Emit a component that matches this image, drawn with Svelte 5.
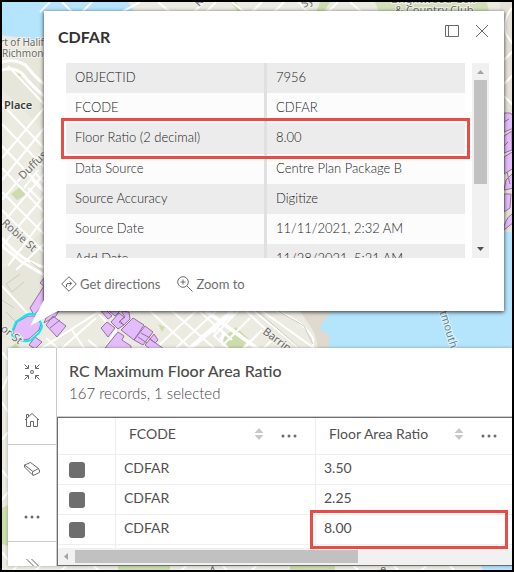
<script>
  const fields = [
    ['OBJECTID', '7956'],
    ['FCODE', 'CDFAR'],
    ['Floor Ratio (2 decimal)', '8.00'],
    ['Data Source', 'Centre Plan Package B'],
    ['Source Accuracy', 'Digitize'],
    ['Source Date', '11/11/2021, 2:32 AM'],
    ['Add Date', '11/28/2021, 5:21 AM']
  ];
  const columns = ['FCODE', 'Floor Area Ratio'];
  const records = [
    ['CDFAR', '3.50'],
    ['CDFAR', '2.25'],
    ['CDFAR', '8.00']
  ];
</script>

<div class="app">
  <svg class="map" viewBox="2 2 510 568" preserveAspectRatio="xMinYMin slice" aria-hidden="true">
    <rect width="514" height="572" fill="#ecebe2" />
    <path d="M2 60L44 50V130L2 90ZM2 270L44 230V300L2 340Z" fill="#e6e6da" />
    <path d="M0 0H127L136 14H44V44L24 38L0 35Z" fill="#b5e4fd" />
    <path d="M300 300H345L330 330V348H318L314 332L300 311Z" fill="#dfd9cf" />
    <path d="M329 308H504V231L514 233V350H328L330 336L323 331L319 328L326 318L330 314Z" fill="#b5e4fd" />
    <path d="M500 0H514V232L504 231Z" fill="#e6e1d8" />
    <path d="M374 0H486L490 14H380Z" fill="#d3dfba" />
    <path d="M222 339L236 327L249 339L241 349H230ZM158 324L165 327L162 332ZM11 194L20 187L28 194L17 200ZM2 508L8 505V546L2 544ZM16 76L19 71L22 76ZM10 348L16 343L20 348ZM118 564H170V572H118ZM290 564H335V572H290ZM320 2H330L324 12H316ZM231 2H236L242 12H238Z" fill="#cddcae" />

    <g fill="none" stroke="#fff" stroke-width="2">
      <path d="M2 104L44 148M2 124L44 167M2 146L44 190M2 168L44 212M2 192L44 234M2 210L44 252M2 286L30 316M8 66L44 104M44 108L2 158M44 128L2 180M44 150L2 200M44 174L2 224M44 196L2 246M44 218L8 266M44 244L16 270" />
      <path d="M2 238Q22 262 44 267M2 246L22 262L44 275" stroke-width="3" />
      <path d="M2 62Q20 58 28 68T44 84M2 70Q16 66 24 76T44 96" stroke-width="3" />
      <path d="M36 174L44 182M32 180L44 192M28 188L40 200M38 170L24 188" />
      <path d="M50 2L40 12M62 2L72 12M92 2L82 12M118 14L140 2M158 2L170 12M204 2L194 12M216 2L206 12M232 2L244 12M262 2L252 12M284 2L274 12M298 2L308 12M338 2L328 12M350 2L364 14" />
      <path d="M150 311L190 348M172 311L214 348M156 348L196 311M176 348L216 311M192 348L234 313M238 311L214 336L228 348M250 318L222 346M262 330L244 348M272 340L262 350M200 312L232 340" />
      <path d="M188 350L232 311M206 311L262 352" stroke-width="4" />
      <path d="M214 333Q216 326 221 330T218 341M221 343L225 332" />
      <path d="M246 311L288 350M254 311L302 350M262 311L314 348M276 311Q300 318 313 338V348" />
      <path d="M42 348L100 311M62 348L96 318M46 338L60 350M84 348L72 330M96 311L132 350M130 311L118 326L104 350M88 340L98 348" />
      <path d="M512 8Q502 20 506 34L514 46M504 60L514 50M504 96L514 106M514 74L504 84" />
      <path d="M2 352L8 360M8 376L2 390M2 402L8 412M2 440L8 432M2 470L8 478M2 500L8 492M2 552L8 560M12 572L20 562M34 572L44 562M60 572L70 562M90 562L100 572M180 572L190 562M220 562L228 572M250 572L260 562M350 562L360 572M390 562L400 572M420 572L430 562M446 562L456 572" />
    </g>
    <path d="M480 564H514V572H484Z" fill="#b5e4fd" />
    <g fill="none" stroke="#cfcbc0" stroke-width="1">
      <path d="M257 311L300 348M278 311L304 326L313 344M20 274L6 284L12 292L24 282M30 262L42 270M6 312L20 326M64 62L44 76M2 300L14 308" />
    </g>

    <g fill="#e2bcfb" stroke="#96709f" stroke-width="1" stroke-linejoin="round">
      <path d="M40 283L44 278V286ZM30 308L44 286V304L34 315ZM46 325L53 316L66 326L57 337ZM50 328L60 320M46 318L60 308L56 316L44 323ZM29 345L35 337L42 342L35 349Z" />
      <path d="M101 311H107L112 316L108 319ZM109 311H120L115 316ZM111 322L119 313L124 317L119 322L124 325L118 329ZM121 311L129 312L130 319L124 325L120 321L125 317ZM101 328L107 322L115 328L108 337ZM105 348L118 332L124 336L122 340L131 346V350ZM121 330L133 318L144 325L134 340ZM134 340L145 326L153 332L143 345ZM138 337L147 343M141 333L150 338M145 345L150 339L164 349H150ZM150 339L154 334L158 340L155 343Z" />
      <path d="M504 113H510L514 116V128L504 132ZM504 136L512 131V150L504 153ZM504 157L514 151V168L504 174ZM506 180L514 172V188L504 190ZM504 194H511L510 208L504 212ZM504 226Q507 216 514 213V222L504 230ZM504 122L509 119M508 142L504 146M507 172L510 184" />
      <path d="M13 332L17 322L28 316H36L41 324L39 330L29 339L18 341Z" />
    </g>
    <path d="M12 332L16 322L23 317Q29 312 36 315Q41 321 42 327L39 333L31 340Q26 343 16 339Q11 337 12 332Z" fill="none" stroke="#00eef5" stroke-width="2" />

    <g class="label">
      <text x="0" y="46">rt of Halifax</text>
      <text x="2" y="57">Richmond</text>
      <text x="4" y="109" class="place">Place</text>
      <text transform="translate(23 180) rotate(-45)">Duffus St</text>
      <text transform="translate(1 224) rotate(42)">Robie St</text>
      <text transform="translate(0 330) rotate(38)">or St</text>
      <text transform="translate(262 333) rotate(37)">Barrington</text>
      <text x="391" y="3">Brightwood Golf</text>
      <text x="395" y="14">&amp; Country Club</text>
      <text transform="translate(304 8) rotate(-30)">Sy</text>
      <text transform="translate(199 7) rotate(-48)">R</text>
      <text transform="translate(434 294) rotate(73)" class="water">Dartmouth</text>
      <text x="380" y="573">e</text>
      <text x="209" y="574">A</text>
    </g>
  </svg>

  <section class="popup" aria-label="Feature details">
    <header>
      <h2>CDFAR</h2>
      <button aria-label="Dock">
        <svg width="16" height="16" viewBox="0 0 16 16"><path d="M1.500 2.500H14.500V13.500H1.500ZM4.500 2.500V13.500" /></svg>
      </button>
      <button aria-label="Close">
        <svg width="16" height="16" viewBox="0 0 16 16"><path d="M2 2L14 14M14 2L2 14" /></svg>
      </button>
    </header>
    <div class="content">
      <div class="fields">
        <table>
          <tbody>
            {#each fields as [name, value]}
              <tr><th scope="row">{name}</th><td>{value}</td></tr>
            {/each}
          </tbody>
        </table>
      </div>
      <div class="vscroll" aria-hidden="true">
        <svg width="17" height="17"><path d="M5 11L8.500 7L12 11Z" fill="#a3a3a3" /></svg>
        <div class="thumb"></div>
        <svg width="17" height="17"><path d="M5 6L8.500 10L12 6Z" fill="#505050" /></svg>
      </div>
      <div class="mark field-mark"></div>
    </div>
    <footer>
      <button>
        <svg width="16" height="16" viewBox="0 0 16 16"><path d="M8 .7L15.300 8L8 15.300L.7 8ZM5.500 11V9Q5.500 7.500 7 7.500H10.500M8.700 5.500L10.700 7.500L8.700 9.500" /></svg>
        Get directions
      </button>
      <button>
        <svg width="16" height="16" viewBox="0 0 16 16"><circle cx="6" cy="6" r="5.300" /><path d="M9.800 9.800L15.500 15.500M6 3.500V8.500M3.500 6H8.500" /></svg>
        Zoom to
      </button>
    </footer>
    <svg class="pointer" width="34" height="34" viewBox="0 0 34 34" aria-hidden="true"><path d="M14 0V8L0 34L28 19H34V0Z" /></svg>
  </section>

  <section class="panel" aria-label="Attribute table">
    <nav>
      <button aria-label="Zoom to selection">
        <svg width="18" height="18" viewBox="0 0 18 18"><path d="M1.500 1.500L5.500 5.500M5.500 2V5.500H2M16.500 1.500L12.500 5.500M12.500 2V5.500H16M1.500 16.500L5.500 12.500M5.500 16V12.500H2M16.500 16.500L12.500 12.500M12.500 16V12.500H16" /><circle cx="9" cy="9" r="1.500" /></svg>
      </button>
      <button aria-label="Home">
        <svg width="16" height="16" viewBox="0 0 16 16"><path d="M1 8L8 1.500L15 8M2.500 7V14.500H6.500V9.500H9.500V14.500H13.500V7M2.500 6.500V2.500H4.500V4.500" /></svg>
      </button>
      <hr />
      <button aria-label="Clear selection">
        <svg width="18" height="16" viewBox="0 0 18 16" stroke-linejoin="round"><path d="M1.500 4L7.500 1.500L15.500 7.500L10 10.500ZM1.500 4V6L9 13.500Q10 14.600 11 14.200L16.300 11.500Q17.300 10.500 15.500 7.500M10 10.500Q8.500 11.800 10 14.200" /></svg>
      </button>
      <button aria-label="More">
        <svg class="solid" width="16" height="16" viewBox="0 0 16 16"><circle cx="2" cy="8" r="1.500" /><circle cx="8" cy="8" r="1.500" /><circle cx="14" cy="8" r="1.500" /></svg>
      </button>
      <hr />
      <button aria-label="Expand">
        <svg width="16" height="16" viewBox="0 0 16 16"><path d="M2.500 1L9.500 8L2.500 15M7.500 1L14.500 8L7.500 15" /></svg>
      </button>
    </nav>
    <div class="main">
      <div class="heading">
        <h3>RC Maximum Floor Area Ratio</h3>
        <p>167 records, 1 selected</p>
      </div>
      <div class="grid">
        <table>
          <colgroup><col class="pick-col" /><col class="code-col" /><col /></colgroup>
          <thead>
            <tr>
              <th></th>
              {#each columns as name}
                <th scope="col">
                  <div class="column-head">
                    <span>{name}</span>
                    <button aria-label="Sort {name}">
                      <svg width="10" height="14" viewBox="0 0 10 14"><path d="M0.500 6L5 1L9.500 6ZM0.500 8L5 13L9.500 8Z" fill="#cacaca" stroke="none" /></svg>
                    </button>
                    <button aria-label="{name} options">
                      <svg class="solid" width="16" height="14" viewBox="0 0 16 14"><circle cx="2" cy="9" r="1.500" /><circle cx="8" cy="9" r="1.500" /><circle cx="14" cy="9" r="1.500" /></svg>
                    </button>
                  </div>
                </th>
              {/each}
            </tr>
          </thead>
          <tbody>
            {#each records as [code, ratio], i}
              <tr>
                <td><input type="checkbox" aria-label="Select row {i + 1}" /></td>
                <td>{code}</td>
                <td>{ratio}</td>
              </tr>
            {/each}
            <tr class="next"><td></td><td></td><td></td></tr>
          </tbody>
        </table>
        <div class="hscroll" aria-hidden="true">
          <svg width="17" height="17"><path d="M10 5L6 8.500L10 12Z" fill="#a3a3a3" /></svg>
          <div class="thumb"></div>
        </div>
        <div class="mark cell-mark"></div>
      </div>
    </div>
  </section>
</div>

<style>
  :global(body) { margin: 0; }
  .app, .app * { box-sizing: border-box; }
  .app {
    position: relative;
    border: 2px solid #000;
    padding: 9px 0 4px;
    overflow: hidden;
    font-family: Lato, "Liberation Sans", sans-serif;
    font-size: 13px;
    color: #505050;
  }
  .map { position: absolute; inset: 0; width: 100%; height: 100%; }
  .label text {
    font: 11px "Noto Sans", sans-serif;
    fill: #6b6b6b;
    stroke: #f3f2ea;
    stroke-width: 2px;
    paint-order: stroke;
  }
  .label text:nth-child(-n+2) { font-size: 10px; }
  .label .place { font-weight: 600; fill: #3d3d3d; }
  .label .water { fill: #5c8794; stroke: #e3f5fd; }
  svg { display: block; fill: none; stroke: #6a6a6a; flex: none; }
  .map, .vscroll svg, .hscroll svg { stroke: none; }
  .solid { fill: #6a6a6a; stroke: none; }
  button {
    display: flex;
    align-items: center;
    justify-content: center;
    border: 0;
    padding: 0;
    background: none;
    font: inherit;
    color: inherit;
  }
  h2, h3, p { margin: 0; }
  table { width: 100%; border-collapse: separate; border-spacing: 0; table-layout: fixed; }
  th { font-weight: 400; text-align: left; }
  .thumb { background: #c1c1c1; }
  .mark { position: absolute; border: 3px solid #e84c47; pointer-events: none; }

  .popup {
    position: relative;
    margin: 0 8px 0 42px;
    height: 300px;
    background: #fff;
    box-shadow: 0 1px 4px rgba(0, 0, 0, .8);
  }
  header { display: flex; gap: 14px; height: 52px; padding: 12px 14px 0; }
  header button { height: 16px; }
  h2 { flex: 1; font-size: 16px; line-height: 28px; color: #323232; }
  .content { position: relative; display: flex; gap: 7px; height: 195px; margin: 0 15px 0 22px; }
  .fields { flex: 1; overflow: hidden; }
  .fields tr { height: 30px; background: #fcfcfc; }
  .fields tr:nth-child(odd) { background: #ececec; }
  .fields tr:nth-child(3) { height: 31px; }
  .fields th, .fields td { padding: 0 9px 3px; line-height: 20px; font-weight: 300; color: #222; }
  .fields th { width: 201px; border-right: 3px solid #e0e0e0; }
  .vscroll { display: flex; flex-direction: column; width: 17px; background: #f1f1f1; }
  .vscroll .thumb { height: 104px; margin: 0 2px; }
  .vscroll svg:last-child { margin-top: auto; }
  .field-mark { inset: 55px 19px 99px -5px; }
  footer { display: flex; gap: 17px; padding: 17px 17px 0; color: #6e6e6e; }
  footer button { gap: 3px; line-height: 18px; font-size: 13px; }
  .pointer { position: absolute; left: -14px; bottom: -15px; fill: #fff; stroke: none; }

  .panel {
    position: relative;
    display: flex;
    margin: 37px 0 0 6px;
    height: 218px;
    background: #fff;
    box-shadow: 0 0 3px rgba(0, 0, 0, .3);
  }
  nav { width: 49px; border-right: 1px solid #ccc; overflow: hidden; }
  nav button { width: 48px; height: 48px; }
  hr { margin: 0; border: 0; height: 1px; background: #ccc; }
  .main { flex: 1; min-width: 0; display: flex; flex-direction: column; }
  .heading { height: 69px; padding: 12px; border-bottom: 1px solid #ccc; }
  h3 { font-size: 16px; line-height: 22px; font-weight: 500; color: #4c4c4c; }
  p { font-size: 15px; line-height: 22px; font-weight: 300; color: #444; }
  .grid { position: relative; flex: 1; border: 1px solid #6e6e6e; border-right: 0; font-size: 14px; }
  .pick-col { width: 58px; }
  .code-col { width: 200px; }
  .grid th, .grid td { padding: 0 0 0 8px; border-right: 1px solid #eee; border-bottom: 1px solid #eee; }
  .grid th:last-child, .grid td:last-child { border-right: 0; }
  .grid thead tr { height: 37px; }
  .grid tbody tr { height: 30px; }
  .grid tbody tr.next { height: 3px; }
  .grid tbody tr.next td { border-bottom: 0; }
  .column-head { display: flex; align-items: center; gap: 17px; padding: 0 18px 5px 5px; }
  th:last-child .column-head { padding-right: 15px; }
  .column-head span { flex: 1; }
  .grid td { padding-bottom: 4px; line-height: 20px; }
  .grid .next td { padding: 0; line-height: 0; }
  .grid td:first-child { padding: 0 0 0 11px; }
  input { appearance: none; display: block; width: 16px; height: 16px; margin: 0; border-radius: 3px; background: #6e6e6e; }
  .hscroll { display: flex; height: 17px; background: #f1f1f1; }
  .hscroll .thumb { width: 283px; margin: 2px 0; }
  .cell-mark { inset: 92px 4px 16px 252px; }
</style>
